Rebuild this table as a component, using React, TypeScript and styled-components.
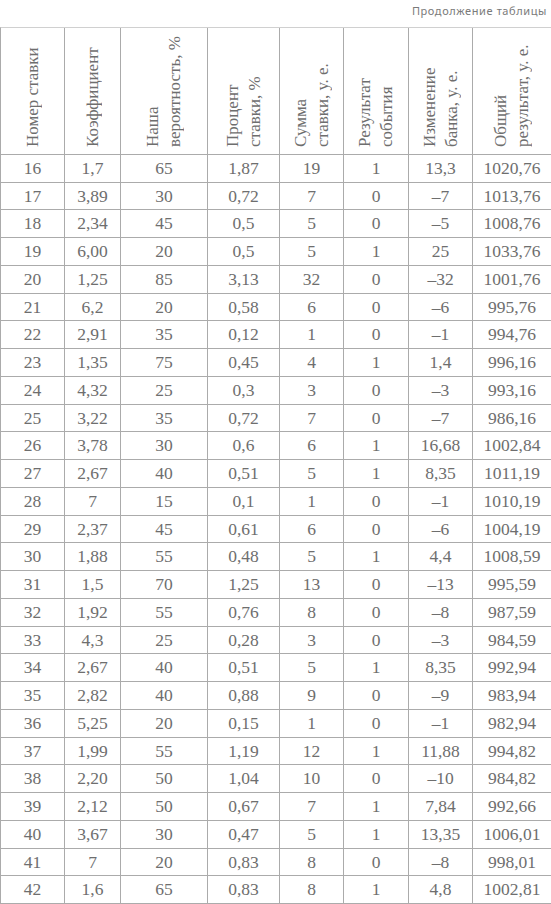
import React from 'react';
import styled, { createGlobalStyle } from 'styled-components';

const GlobalStyle = createGlobalStyle`
  html, body {
    margin: 0;
    padding: 0;
    background: #ffffff;
  }
  body {
    width: 551px;
    overflow: hidden;
    font-family: "Liberation Serif", serif;
  }
`;

const columns = [64, 56, 87, 72, 64, 65, 64, 79];

const headers: string[][] = [
    ['Номер ставки'],
    ['Коэффициент'],
    ['Наша', 'вероятность, %'],
    ['Процент', 'ставки, %'],
    ['Сумма', 'ставки, у. е.'],
    ['Результат', 'события'],
    ['Изменение', 'банка, у. е.'],
    ['Общий', 'результат, у. е.'],
];

const rows: string[][] = [
    ['16', '1,7', '65', '1,87', '19', '1', '13,3', '1020,76'],
    ['17', '3,89', '30', '0,72', '7', '0', '–7', '1013,76'],
    ['18', '2,34', '45', '0,5', '5', '0', '–5', '1008,76'],
    ['19', '6,00', '20', '0,5', '5', '1', '25', '1033,76'],
    ['20', '1,25', '85', '3,13', '32', '0', '–32', '1001,76'],
    ['21', '6,2', '20', '0,58', '6', '0', '–6', '995,76'],
    ['22', '2,91', '35', '0,12', '1', '0', '–1', '994,76'],
    ['23', '1,35', '75', '0,45', '4', '1', '1,4', '996,16'],
    ['24', '4,32', '25', '0,3', '3', '0', '–3', '993,16'],
    ['25', '3,22', '35', '0,72', '7', '0', '–7', '986,16'],
    ['26', '3,78', '30', '0,6', '6', '1', '16,68', '1002,84'],
    ['27', '2,67', '40', '0,51', '5', '1', '8,35', '1011,19'],
    ['28', '7', '15', '0,1', '1', '0', '–1', '1010,19'],
    ['29', '2,37', '45', '0,61', '6', '0', '–6', '1004,19'],
    ['30', '1,88', '55', '0,48', '5', '1', '4,4', '1008,59'],
    ['31', '1,5', '70', '1,25', '13', '0', '–13', '995,59'],
    ['32', '1,92', '55', '0,76', '8', '0', '–8', '987,59'],
    ['33', '4,3', '25', '0,28', '3', '0', '–3', '984,59'],
    ['34', '2,67', '40', '0,51', '5', '1', '8,35', '992,94'],
    ['35', '2,82', '40', '0,88', '9', '0', '–9', '983,94'],
    ['36', '5,25', '20', '0,15', '1', '0', '–1', '982,94'],
    ['37', '1,99', '55', '1,19', '12', '1', '11,88', '994,82'],
    ['38', '2,20', '50', '1,04', '10', '0', '–10', '984,82'],
    ['39', '2,12', '50', '0,67', '7', '1', '7,84', '992,66'],
    ['40', '3,67', '30', '0,47', '5', '1', '13,35', '1006,01'],
    ['41', '7', '20', '0,83', '8', '0', '–8', '998,01'],
    ['42', '1,6', '65', '0,83', '8', '1', '4,8', '1002,81'],
];

const App = () => {
    return (
        <Page>
            <GlobalStyle/>
            <Caption>Продолжение таблицы</Caption>
            <Table $cols={columns}>
                {headers.map((lines, i) => (
                    <HeadCell key={'h' + i}>
                        <HeadText>
                            {lines.map((line, j) => (
                                <React.Fragment key={j}>
                                    {j > 0 && <br/>}
                                    {line}
                                </React.Fragment>
                            ))}
                        </HeadText>
                    </HeadCell>
                ))}
                {rows.map((row, r) =>
                    row.map((value, c) => (
                        <Cell key={r + '-' + c}>{value}</Cell>
                    ))
                )}
            </Table>
        </Page>
    );
};

export default App;

const Page = styled.div`
  width: 551px;
  height: 904px;
  overflow: hidden;
  display: flex;
  flex-direction: column;
  font-family: "Liberation Serif", serif;
`;

const Caption = styled.div`
  height: 27px;
  box-sizing: border-box;
  padding: 4px 4px 0 0;
  text-align: right;
  font-family: "Noto Sans", sans-serif;
  font-size: 11px;
  line-height: 14px;
  letter-spacing: 0.6px;
  color: #7a7a7a;
`;

const Table = styled.div<{ $cols: number[] }>`
  display: grid;
  grid-template-columns: ${p => p.$cols.map(w => w + 'px').join(' ')};
  grid-template-rows: 127px;
  grid-auto-rows: 27.75px;
  border-top: 1px solid #d0d0d0;
  border-left: 1px solid #ababab;
  color: #6e6e6e;
  font-family: "Liberation Serif", serif;
`;

const HeadCell = styled.div`
  box-sizing: border-box;
  border-right: 1px solid #ababab;
  border-bottom: 1px solid #ababab;
  display: flex;
  align-items: flex-end;
  justify-content: center;
  padding-bottom: 7px;
`;

const HeadText = styled.div`
  writing-mode: vertical-rl;
  transform: rotate(180deg);
  white-space: nowrap;
  height: 118px;
  font-size: 17px;
  line-height: 22px;
  text-align: start;
`;

const Cell = styled.div`
  box-sizing: border-box;
  border-right: 1px solid #ababab;
  border-bottom: 1px solid #ababab;
  display: flex;
  align-items: center;
  justify-content: center;
  font-size: 17.5px;
  line-height: 1;
  padding-top: 1px;
`;
